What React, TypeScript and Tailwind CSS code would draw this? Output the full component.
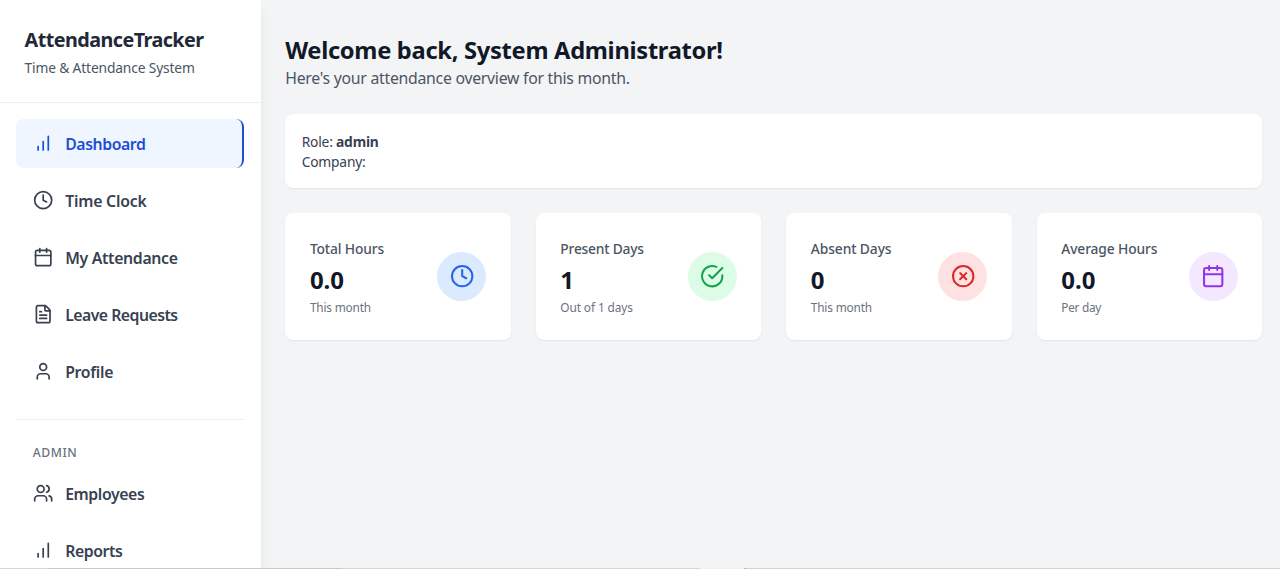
import type { ComponentType } from 'react';
import { Calendar, CircleX, Clock, FileText, User, Users } from 'lucide-react';

type IconType = ComponentType<{ className?: string }>;

function BarsIcon({ className }: { className?: string }) {
  return (
    <svg viewBox="0 0 24 24" fill="none" stroke="currentColor" strokeWidth="2" strokeLinecap="round" strokeLinejoin="round" className={className}>
      <path d="M12 20V10M18 20V4M6 20v-4" />
    </svg>
  );
}

function CheckCircleIcon({ className }: { className?: string }) {
  return (
    <svg viewBox="0 0 24 24" fill="none" stroke="currentColor" strokeWidth="2" strokeLinecap="round" strokeLinejoin="round" className={className}>
      <path d="M22 11.08V12a10 10 0 1 1-5.93-9.14" />
      <path d="m9 11 3 3L22 4" />
    </svg>
  );
}

type NavEntry = { label: string; icon: IconType; tracking: string; active?: boolean };

const mainNav: NavEntry[] = [
  { label: 'Dashboard', icon: BarsIcon, tracking: 'tracking-[-0.42px]', active: true },
  { label: 'Time Clock', icon: Clock, tracking: 'tracking-[-0.22px]' },
  { label: 'My Attendance', icon: Calendar, tracking: 'tracking-[-0.32px]' },
  { label: 'Leave Requests', icon: FileText, tracking: 'tracking-[-0.52px]' },
  { label: 'Profile', icon: User, tracking: 'tracking-[-0.3px]' },
];

const adminNav: NavEntry[] = [
  { label: 'Employees', icon: Users, tracking: 'tracking-[-0.4px]' },
  { label: 'Reports', icon: BarsIcon, tracking: 'tracking-[-0.42px]' },
];

const stats = [
  { label: 'Total Hours', labelTracking: 'tracking-[-0.13px]', value: '0.0', note: 'This month', noteTracking: 'tracking-[-0.18px]', icon: Clock, tone: 'bg-[#dbeafe] text-[#2563eb]' },
  { label: 'Present Days', labelTracking: 'tracking-[-0.22px]', value: '1', note: 'Out of 1 days', noteTracking: 'tracking-[-0.1px]', icon: CheckCircleIcon, tone: 'bg-[#dcfce7] text-[#16a34a]' },
  { label: 'Absent Days', labelTracking: 'tracking-[-0.1px]', value: '0', note: 'This month', noteTracking: 'tracking-[-0.18px]', icon: CircleX, tone: 'bg-[#fee2e2] text-[#dc2626]' },
  { label: 'Average Hours', labelTracking: 'tracking-[-0.13px]', value: '0.0', note: 'Per day', noteTracking: 'tracking-[-0.3px]', icon: Calendar, tone: 'bg-[#f3e8ff] text-[#9333ea]' },
];

function NavItem({ label, icon: Icon, tracking, active }: NavEntry) {
  return (
    <a
      className={`flex h-[48.8px] items-center rounded-lg pl-[16.3px] text-[15.8px] font-semibold ${tracking} ${
        active ? 'border-r-2 border-[#1d4ed8] bg-[#eff6ff] text-[#1d4ed8]' : 'text-[#374151]'
      }`}
    >
      <Icon className="mr-[12.2px] size-[20.4px]" />
      <span className="pt-[3.6px]">{label}</span>
    </a>
  );
}

function StatCard({ label, labelTracking, value, note, noteTracking, icon: Icon, tone }: (typeof stats)[number]) {
  return (
    <div className="flex h-[126.5px] items-center justify-between rounded-lg bg-white px-[24.7px] shadow-[0_1px_2px_rgba(0,0,0,0.07)]">
      <div className="pt-1">
        <p className={`text-[13.8px] leading-5 font-medium text-[#4b5563] ${labelTracking}`}>{label}</p>
        <p className="mt-[3px] text-2xl leading-9 font-bold text-[#111827]">{value}</p>
        <p className={`-mt-px text-[11.85px] leading-5 text-[#6b7280] ${noteTracking}`}>{note}</p>
      </div>
      <div className={`flex size-[49px] items-center justify-center rounded-full ${tone}`}>
        <Icon className="size-[24.4px]" />
      </div>
    </div>
  );
}

export default function App() {
  return (
    <div className="flex h-[569px] flex-col overflow-hidden bg-[#f3f4f6] font-['Noto_Sans',sans-serif]">
      <div className="flex min-h-0 flex-1">
        <aside className="w-[260.6px] shrink-0 overflow-hidden bg-white shadow-[0_8px_14px_-2px_rgba(0,0,0,0.08)]">
          <div className="h-[102.6px] border-b border-[#eceef1] px-[24.5px] pt-[26px]">
            <h1 className="text-[19.75px] leading-7 font-bold tracking-[-0.54px] text-[#1f2937]">AttendanceTracker</h1>
            <p className="mt-1 text-[13.8px] leading-5 tracking-[-0.155px] text-[#4b5563]">Time &amp; Attendance System</p>
          </div>
          <nav className="px-[16.3px] pt-[16.2px]">
            <div className="flex flex-col gap-[8.1px]">
              {mainNav.map((item) => (
                <NavItem key={item.label} {...item} />
              ))}
            </div>
            <div className="mt-6 border-t border-[#eceef1] pt-[23px]">
              <p className="mb-[5.5px] pl-[16.5px] text-[12.2px] leading-5 font-medium tracking-[0.5px] text-[#6b7280]">ADMIN</p>
              <div className="flex flex-col gap-[8.1px]">
                {adminNav.map((item) => (
                  <NavItem key={item.label} {...item} />
                ))}
              </div>
            </div>
          </nav>
        </aside>
        <main className="min-w-0 flex-1 pt-[34px] pr-[17.6px] pl-[24.6px]">
          <h2 className="text-[23.7px] leading-8 font-bold tracking-[-0.3px] text-[#111827]">
            Welcome back, System Administrator!
          </h2>
          <p className="text-[15.8px] leading-6 tracking-[-0.26px] text-[#4b5563]">
            Here's your attendance overview for this month.
          </p>
          <section className="mt-6 h-[74px] rounded-lg bg-white px-[16.5px] pt-[18px] text-[13.8px] leading-[20.4px] text-[#374151] shadow-[0_1px_2px_rgba(0,0,0,0.07)]">
            <p className="tracking-[-0.2px]">
              Role: <strong className="font-bold">admin</strong>
            </p>
            <p className="tracking-[-0.2px]">Company:</p>
          </section>
          <section className="mt-[25px] grid grid-cols-4 gap-[24.7px]">
            {stats.map((stat) => (
              <StatCard key={stat.label} {...stat} />
            ))}
          </section>
        </main>
      </div>
      <div className="flex h-px shrink-0 bg-[#d0d5da]">
        <div className="w-12 bg-[#d1d9e6]" />
        <div className="w-[294px] bg-[#c9c7c8]" />
        <div className="w-[358px] bg-[#d3d6d9]" />
        <div className="w-11 bg-[#f0f1f3]" />
        <div className="w-0.5 bg-[#b4b8bd]" />
      </div>
    </div>
  );
}
